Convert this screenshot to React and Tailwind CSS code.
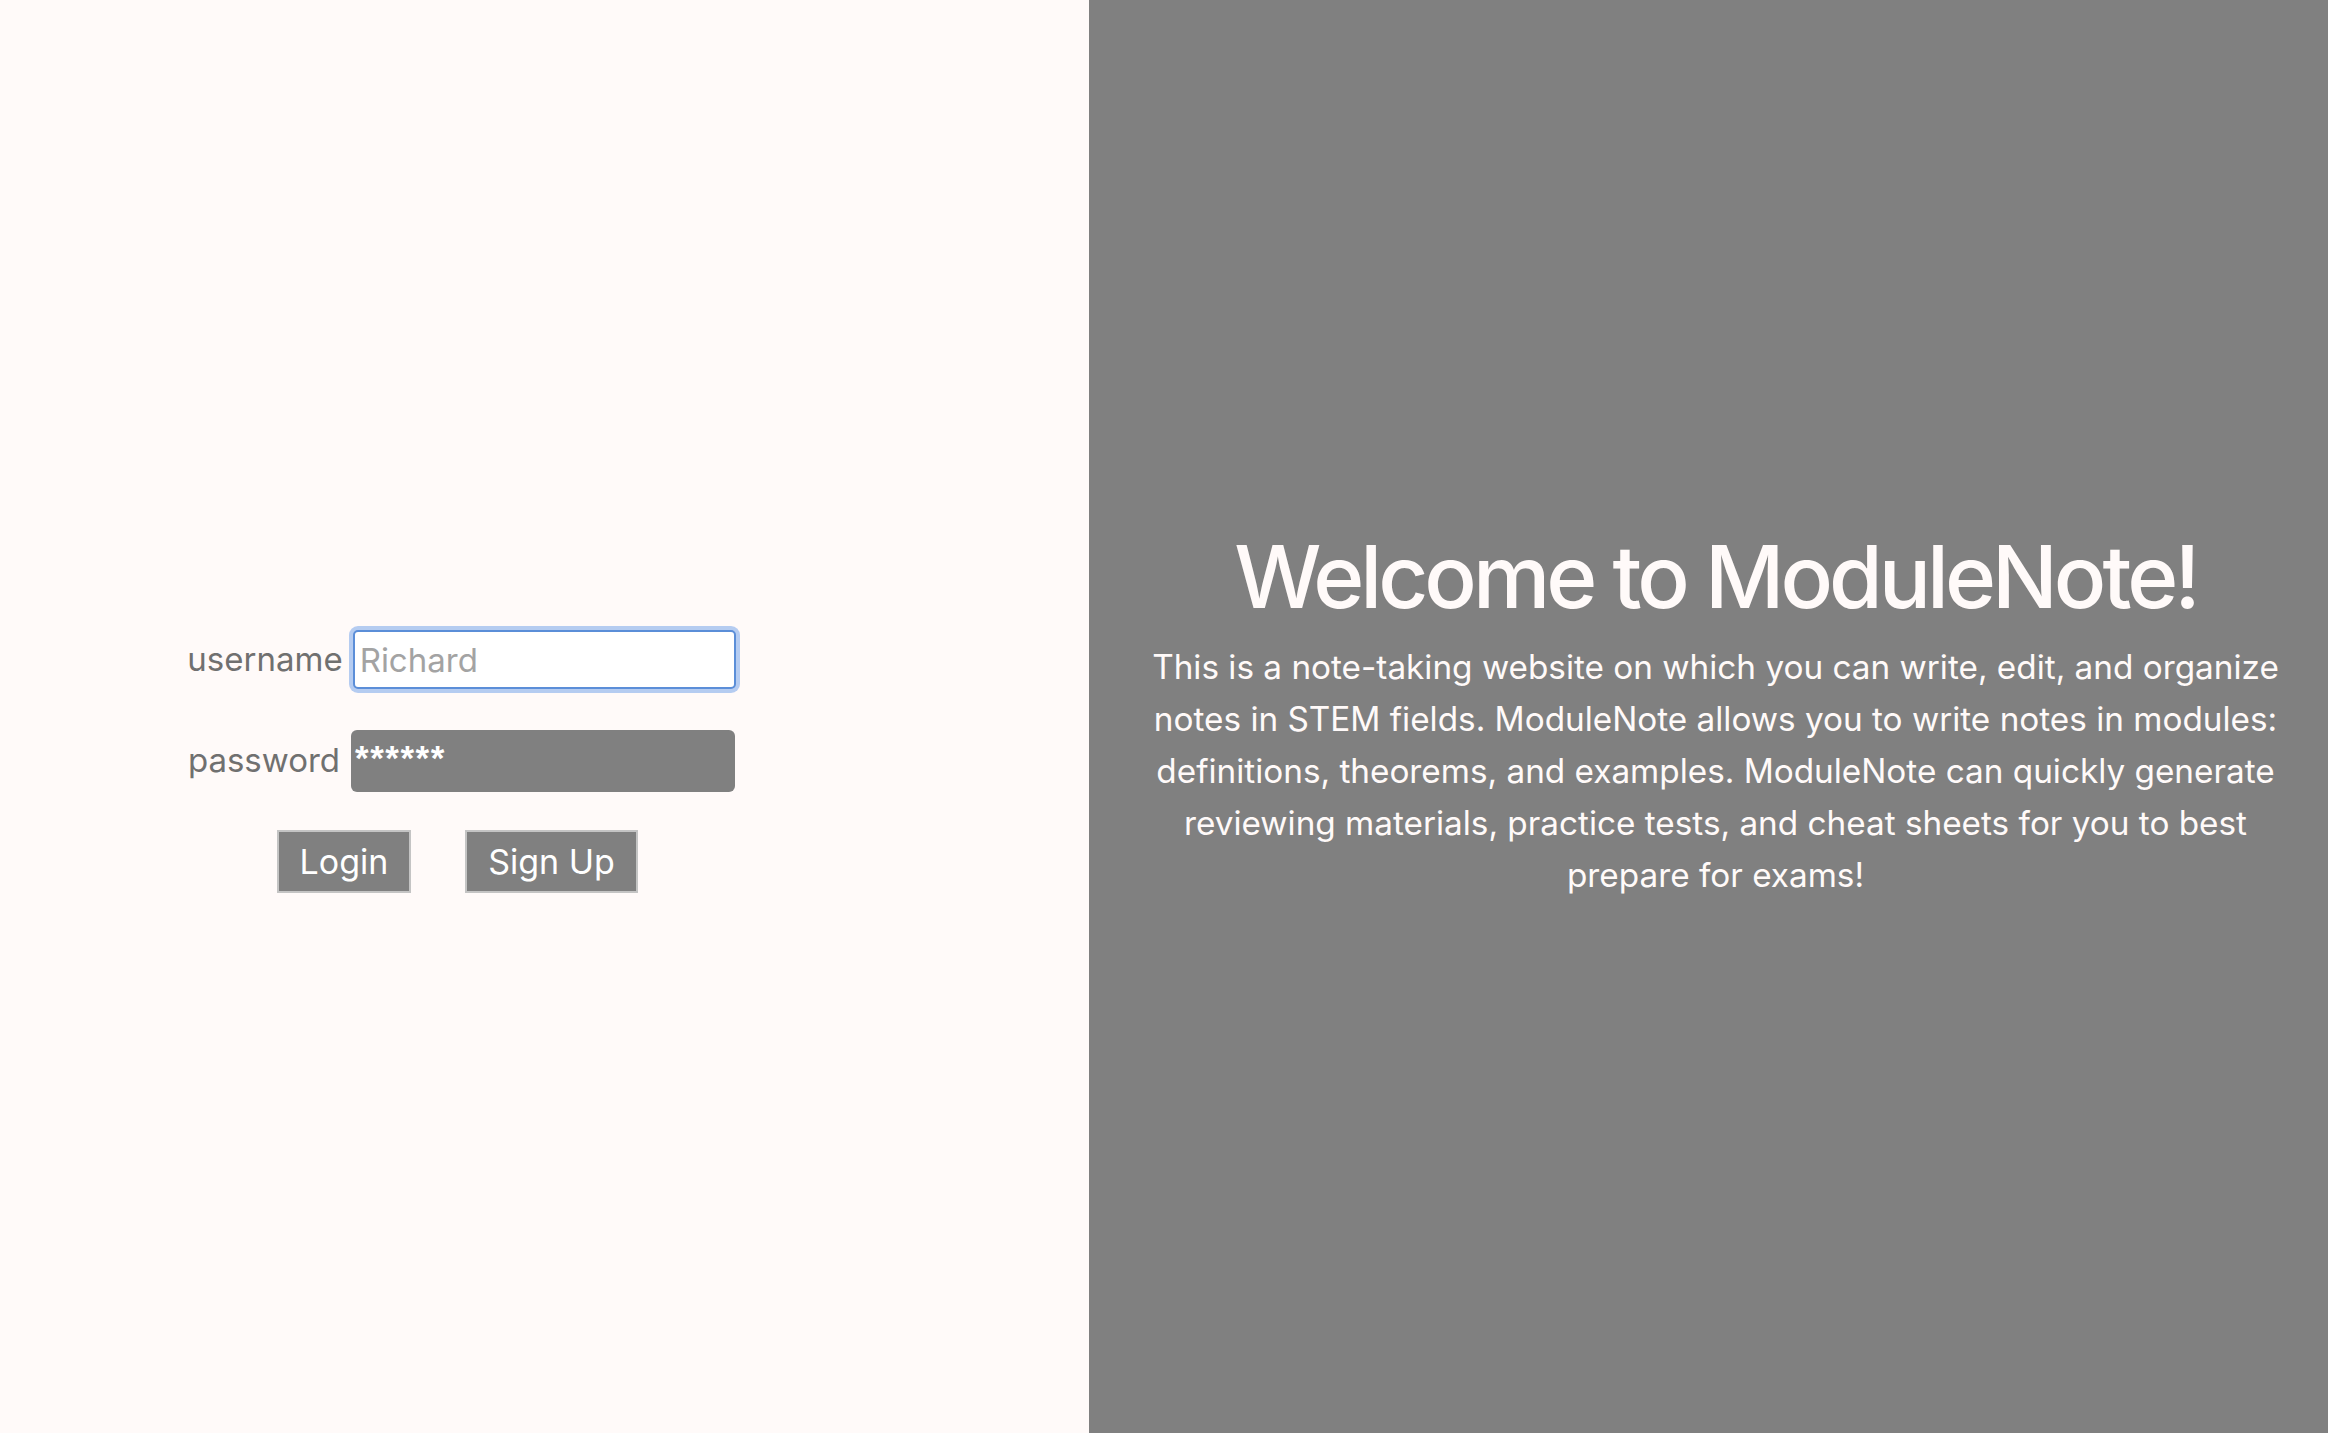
import React from 'react';

const LoginPanel = () => {
    return (
        <div className="w-[1089px] shrink-0 h-full bg-[#fffaf9] flex items-center justify-center pt-[90px] pr-[166px]">
            <form className="flex flex-col items-center" onSubmit={e => e.preventDefault()}>
                {/* username row */}
                <div className="flex items-center gap-[10px] h-[59px]">
                    <label className="text-[33px] text-[#707070]">username</label>
                    <input
                        type="text"
                        placeholder="Richard"
                        className="w-[383px] h-[59px] bg-white border-2 border-[#5b8ed8] rounded-[5px] shadow-[0_0_0_4px_rgba(120,165,235,0.55)] px-[5px] text-[33px] text-[#333] placeholder:text-[#a3a3a3] outline-none"
                    />
                </div>

                {/* password row */}
                <div className="flex items-center gap-[11px] h-[62px] mt-[41px]">
                    <label className="text-[33px] text-[#707070]">password</label>
                    <div className="w-[384px] h-[62px] bg-[#808080] rounded-[6px] px-[4px] pt-[10px] text-[35px] font-bold leading-none text-white tracking-[1.5px] font-['Liberation_Sans',sans-serif]">
                        ******
                    </div>
                </div>

                {/* buttons */}
                <div className="flex items-center gap-[54px] mt-[38px] mr-[8px]">
                    <button className="w-[134px] h-[63px] bg-[#808080] border-2 border-[#c4c4c4] text-white text-[34px]">
                        Login
                    </button>
                    <button className="w-[173px] h-[63px] bg-[#808080] border-2 border-[#c4c4c4] text-white text-[34px]">
                        Sign Up
                    </button>
                </div>
            </form>
        </div>
    );
};

const WelcomePanel = () => {
    return (
        <div className="flex-1 h-full bg-[#808080] flex flex-col items-center justify-center pl-[50px] pr-[36px] pb-[10px] text-[#fffaf9] text-center">
            <h1 className="text-[87px] font-medium leading-[1.2] tracking-[-4px] pt-[3px]">Welcome to ModuleNote!</h1>
            <p className="mt-[12px] text-[33.3px] leading-[52px] max-w-[1150px]">
                This is a note-taking website on which you can write, edit, and organize notes in STEM fields.
                ModuleNote allows you to write notes in modules: definitions, theorems, and examples. ModuleNote
                can quickly generate reviewing materials, practice tests, and cheat sheets for you to best prepare
                for exams!
            </p>
        </div>
    );
};

export default function App() {
    return (
        <div className="w-[2328px] h-[1433px] flex font-['Inter',sans-serif] overflow-hidden">
            <LoginPanel />
            <WelcomePanel />
        </div>
    );
}
